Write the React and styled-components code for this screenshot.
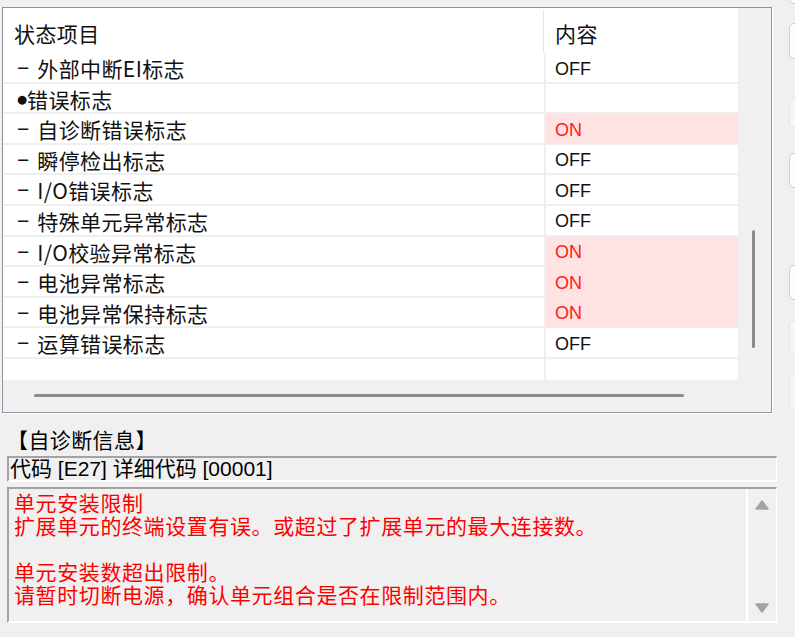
import styled, { createGlobalStyle } from "styled-components";

const GlobalStyle = createGlobalStyle`
  html, body {
    margin: 0;
    background: #f0f0f0;
    overflow: hidden;
  }
  body {
    font-family: "Noto Sans CJK SC", sans-serif;
    color: #111;
  }
`;

const rows = [
  { label: "外部中断EI标志", value: "OFF", kind: "child" },
  { label: "错误标志", value: "", kind: "group" },
  { label: "自诊断错误标志", value: "ON", kind: "child" },
  { label: "瞬停检出标志", value: "OFF", kind: "child" },
  { label: "I/O错误标志", value: "OFF", kind: "child" },
  { label: "特殊单元异常标志", value: "OFF", kind: "child" },
  { label: "I/O校验异常标志", value: "ON", kind: "child" },
  { label: "电池异常标志", value: "ON", kind: "child" },
  { label: "电池异常保持标志", value: "ON", kind: "child" },
  { label: "运算错误标志", value: "OFF", kind: "child" },
  { label: "", value: "", kind: "empty" },
];

const sideButtons = [
  { gap: -30, height: 34, faint: false },
  { gap: 19, height: 36, faint: false },
  { gap: 38, height: 31, faint: true },
  { gap: 25, height: 35, faint: false },
  { gap: 77, height: 35, faint: false },
  { gap: 20, height: 33, faint: true },
  { gap: 22, height: 35, faint: true },
];

const messageLines = [
  "单元安装限制",
  "扩展单元的终端设置有误。或超过了扩展单元的最大连接数。",
  "",
  "单元安装数超出限制。",
  "请暂时切断电源，确认单元组合是否在限制范围内。",
];

const Page = styled.div`
  display: flex;
  width: 795px;
  height: 637px;
`;

const Main = styled.div`
  width: 787px;
  flex-shrink: 0;
  padding: 7px 0 0 2px;
  box-sizing: border-box;
  display: flex;
  flex-direction: column;
`;

const TableFrame = styled.div`
  width: 770px;
  height: 406px;
  box-sizing: border-box;
  border: 1px solid #8e939d;
  box-shadow: 1px 1px 0 #ffffff;
  display: grid;
  grid-template-columns: 735px 1fr;
  grid-template-rows: 372px 1fr;
`;

const TableBody = styled.div`
  background: #ffffff;
  overflow: hidden;
  border-bottom-right-radius: 4px;
`;

const HeaderRow = styled.div`
  display: grid;
  grid-template-columns: 541px 1fr;
  height: 45px;
  font-size: 21px;
  letter-spacing: 0.4px;
`;

const HeaderCell = styled.div`
  display: flex;
  align-items: center;
  padding: 4px 0 0 ${({ $pad }) => $pad}px;
  margin: 2px 0 1px;
  border-right: ${({ $divider }) => ($divider ? "1px solid #e4e4e4" : "none")};
`;

const Row = styled.div`
  display: grid;
  grid-template-columns: 541px 1fr;
  height: 30.6px;
  box-sizing: border-box;
  border-bottom: 2px solid #efefef;
`;

const LabelCell = styled.div`
  display: flex;
  align-items: center;
  padding-left: 14px;
  font-size: 21px;
  letter-spacing: 0.4px;
  white-space: nowrap;
`;

const Dash = styled.span`
  font-family: "Liberation Sans", Arial, sans-serif;
  margin-right: 8px;
  letter-spacing: 0;
`;

const Bullet = styled.span`
  font-family: "DejaVu Sans", sans-serif;
  font-size: 11.5px;
  letter-spacing: 0;
  margin: 1px 0 0 0;
`;

const ValueCell = styled.div`
  display: flex;
  align-items: center;
  padding: 2px 0 0 9px;
  border-left: 2px solid #efefef;
  background: ${({ $on }) => ($on ? "#ffe3e3" : "transparent")};
  color: ${({ $on }) => ($on ? "#ff1a1a" : "#111")};
  font-family: "Liberation Sans", Arial, sans-serif;
  font-size: 18px;
`;

const VTrack = styled.div`
  padding-left: 14px;
`;

const VThumb = styled.div`
  width: 3px;
  height: 118px;
  border-radius: 2px;
  background: #8a8a8a;
`;

const HTrack = styled.div`
  grid-column: 1 / -1;
  padding: 14px 0 0 31px;
`;

const HThumb = styled.div`
  width: 650px;
  height: 3px;
  border-radius: 2px;
  background: #8a8a8a;
`;

const Info = styled.div`
  margin: 15px 0 0 5px;
  width: 770px;
  display: flex;
  flex-direction: column;
  font-size: 21px;
  letter-spacing: 0.4px;
`;

const InfoTitle = styled.div`
  height: 23px;
  line-height: 23px;
  color: #000;
`;

const SunkenBox = styled.div`
  margin-top: ${({ $gap }) => $gap}px;
  box-sizing: border-box;
  border-top: 2px solid #a3a3a3;
  border-left: 2px solid #a3a3a3;
  border-right: 1px solid #ffffff;
  border-bottom: 2px solid #ffffff;
  background: #f0f0f0;
`;

const CodeLine = styled(SunkenBox)`
  height: 26px;
  line-height: 22px;
  padding-left: 1px;
  color: #000;
  white-space: nowrap;
  font-family: "Liberation Sans", "Noto Sans CJK SC", sans-serif;
  letter-spacing: 0;
`;

const MessageBox = styled(SunkenBox)`
  height: 136px;
  display: grid;
  grid-template-columns: 1fr 30px;
`;

const MessageText = styled.div`
  padding: 2px 0 0 5px;
  line-height: 23px;
  color: #ff0000;
  white-space: nowrap;
  letter-spacing: 0.6px;
`;

const MessageLine = styled.div`
  height: 23px;
`;

const MessageScroll = styled.div`
  border-left: 2px solid #ffffff;
  display: flex;
  flex-direction: column;
  justify-content: space-between;
  align-items: center;
  padding: 11px 0 8px;
`;

const Side = styled.div`
  margin-left: 2px;
  display: flex;
  flex-direction: column;
`;

const SideButton = styled.div`
  flex-shrink: 0;
  width: 40px;
  height: ${({ $height }) => $height}px;
  margin-top: ${({ $gap }) => $gap}px;
  box-sizing: border-box;
  border-radius: 5px;
  border: 1px solid ${({ $faint }) => ($faint ? "#e6e6e6" : "#cfcfcf")};
  background: ${({ $faint }) => ($faint ? "#f5f5f5" : "#fdfdfd")};
`;

function Arrow({ down }) {
  return (
    <svg width="14" height="10" viewBox="0 0 14 10">
      <polygon
        points={down ? "1,1 13,1 7,9" : "7,1 13,9 1,9"}
        fill="#a3a3a3"
        stroke="#a3a3a3"
        strokeWidth="1.5"
        strokeLinejoin="round"
      />
    </svg>
  );
}

function StatusRow({ row }) {
  const on = row.value === "ON";
  return (
    <Row>
      <LabelCell>
        {row.kind === "child" && <Dash>−</Dash>}
        {row.kind === "group" && <Bullet>●</Bullet>}
        {row.label}
      </LabelCell>
      <ValueCell $on={on}>{row.value}</ValueCell>
    </Row>
  );
}

export default function App() {
  return (
    <>
      <GlobalStyle />
      <Page>
        <Main>
          <TableFrame>
            <TableBody>
              <HeaderRow>
                <HeaderCell $pad={11} $divider>
                  状态项目
                </HeaderCell>
                <HeaderCell $pad={11}>内容</HeaderCell>
              </HeaderRow>
              {rows.map((row, i) => (
                <StatusRow key={i} row={row} />
              ))}
            </TableBody>
            <VTrack>
              <VThumb style={{ marginTop: 222 }} />
            </VTrack>
            <HTrack>
              <HThumb />
            </HTrack>
          </TableFrame>

          <Info>
            <InfoTitle>【自诊断信息】</InfoTitle>
            <CodeLine $gap={5}>代码 [E27] 详细代码 [00001]</CodeLine>
            <MessageBox $gap={5}>
              <MessageText>
                {messageLines.map((line, i) => (
                  <MessageLine key={i}>{line}</MessageLine>
                ))}
              </MessageText>
              <MessageScroll>
                <Arrow />
                <Arrow down />
              </MessageScroll>
            </MessageBox>
          </Info>
        </Main>
        <Side>
          {sideButtons.map((b, i) => (
            <SideButton key={i} $gap={b.gap} $height={b.height} $faint={b.faint} />
          ))}
        </Side>
      </Page>
    </>
  );
}
